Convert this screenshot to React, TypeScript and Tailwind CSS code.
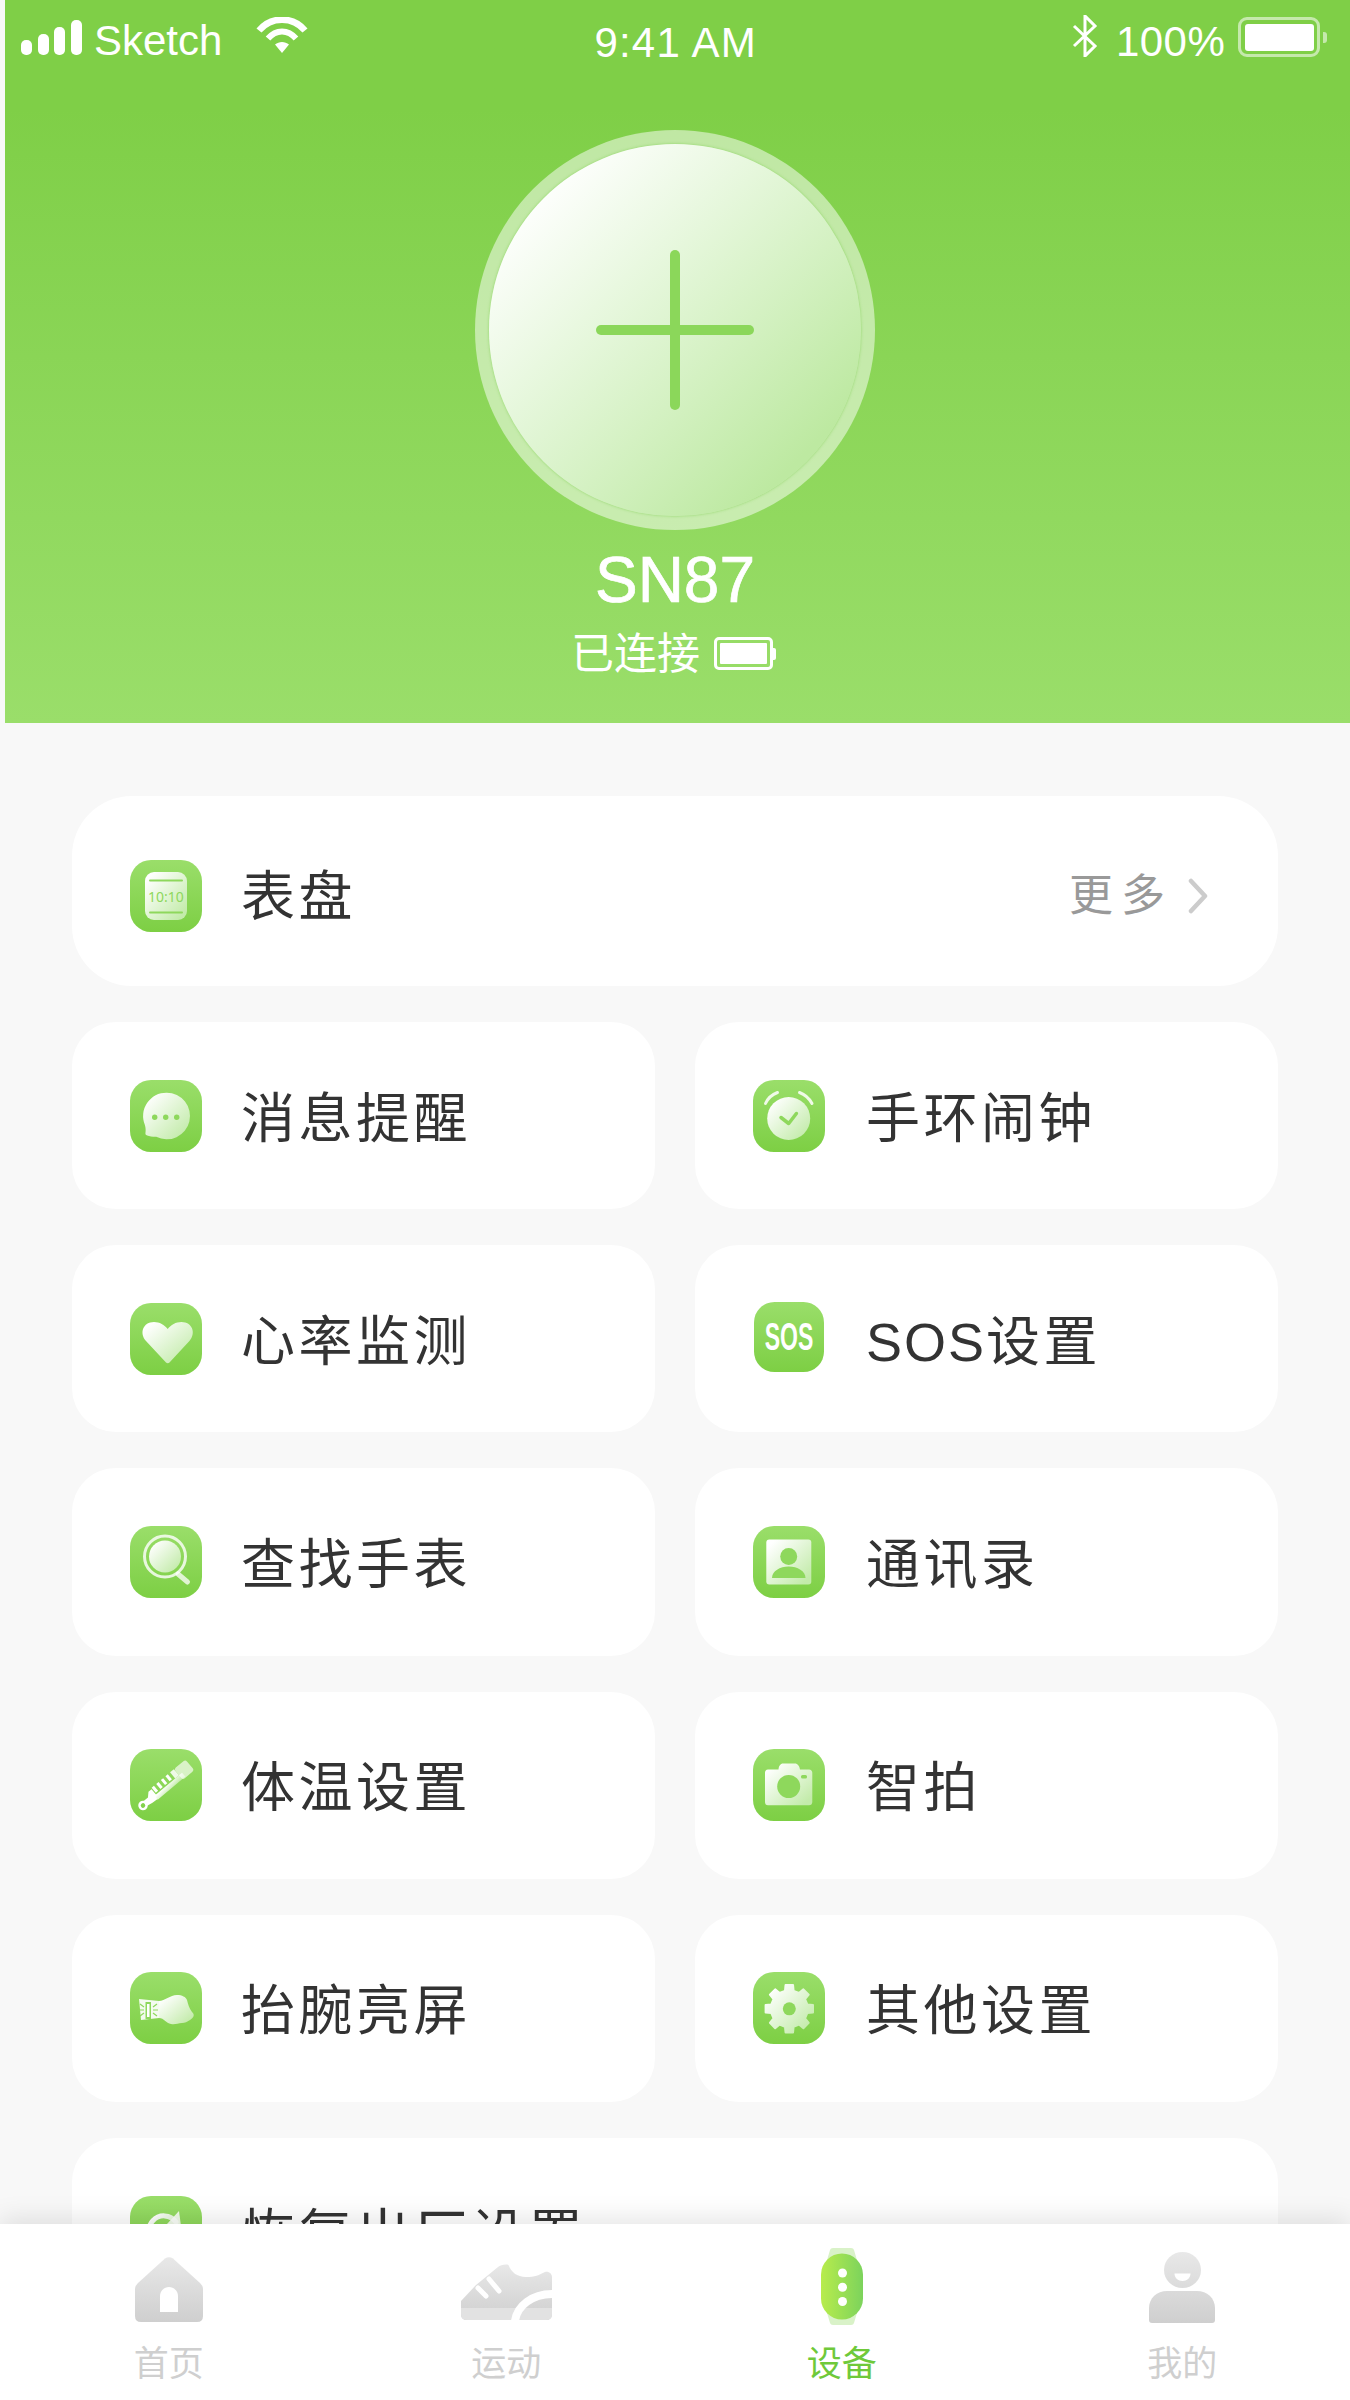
import React from "react";

const CJK = "font-['Liberation_Sans','Noto_Sans_CJK_SC',sans-serif]";

function IconDefs({ id }: { id: string }) {
  return (
    <defs>
      <linearGradient id={`${id}-bg`} x1="0" y1="0" x2="0" y2="1">
        <stop offset="0" stopColor="#9ade6a" />
        <stop offset="1" stopColor="#7dcf44" />
      </linearGradient>
      <linearGradient id={`${id}-fg`} x1="0.1" y1="0.1" x2="0.9" y2="0.9">
        <stop offset="0" stopColor="#ffffff" />
        <stop offset="1" stopColor="#c3ebaa" />
      </linearGradient>
    </defs>
  );
}

function gearPath(cx: number, cy: number, ro: number, ri: number, n: number) {
  const pts: string[] = [];
  for (let i = 0; i < n; i++) {
    const a = (i * 2 * Math.PI) / n - Math.PI / 2;
    const s = (2 * Math.PI) / n;
    const seq: [number, number][] = [
      [a - s * 0.2, ro],
      [a + s * 0.2, ro],
      [a + s * 0.3, ri],
      [a + s * 0.7, ri],
    ];
    seq.forEach(([t, r]) => pts.push(`${(cx + r * Math.cos(t)).toFixed(2)} ${(cy + r * Math.sin(t)).toFixed(2)}`));
  }
  return `M${pts.join(" L")} Z`;
}

const G = "#8ed85c";

const glyphs: Record<string, (fg: string) => React.ReactNode> = {
  dial: (fg) => (
    <>
      <rect x="15" y="12" width="42" height="48" rx="9" fill={fg} />
      <rect x="19" y="19.6" width="34" height="2" rx="1" fill={G} />
      <rect x="19" y="51.6" width="34" height="2" rx="1" fill={G} />
      <text x="36" y="41.5" textAnchor="middle" fontSize="14" fill={G} fontFamily="'Noto Sans',sans-serif">10:10</text>
    </>
  ),
  msg: (fg) => (
    <>
      <path d="M36.7 12.7a23.3 23.3 0 1 1-10.5 44.1c-3 .2-6.5-.6-9-1.4-1.6-.5-2-1.3-1.7-3 .3-2.300.2-4.500-.6-7.400a23.300 23.300 0 0 1 21.800-32.300Z" fill={fg} />
      <circle cx="24.700" cy="37.300" r="2.700" fill={G} />
      <circle cx="35.700" cy="37.300" r="2.700" fill={G} />
      <circle cx="46.700" cy="37.300" r="2.700" fill={G} />
    </>
  ),
  alarm: (fg) => (
    <>
      <circle cx="35.700" cy="38.500" r="21.500" fill={fg} />
      <path d="M12.500 23.500C15 18 19 14.500 24.500 12.500M46.500 12.500C52 14.500 56 18 59 23.500" stroke="#ffffff" strokeOpacity="0.85" strokeWidth="3" strokeLinecap="round" fill="none" />
      <path d="M28 37.500l7.700 6 7.700-10" stroke={G} strokeWidth="3.500" strokeLinecap="round" strokeLinejoin="round" fill="none" />
    </>
  ),
  heart: (fg) => (
    <path d="M36 59.500 16 38C9 30 13 19 24 19c5.500 0 10.500 2.800 13.700 7 3.200-4.200 8.200-7 13.700-7 11 0 15 11 8 19L39.500 59.500c-1 1.100-2.500 1.100-3.500 0Z" fill={fg} />
  ),
  sos: () => (
    <text x="36" y="49" textAnchor="middle" fontSize="39" fontWeight="700" fill="#ffffff" fontFamily="'Liberation Sans',sans-serif" textLength="50" lengthAdjust="spacingAndGlyphs">SOS</text>
  ),
  search: (fg) => (
    <>
      <circle cx="35" cy="30.500" r="20.500" fill="none" stroke="#ffffff" strokeOpacity="0.8" strokeWidth="3" />
      <circle cx="35" cy="30.500" r="16" fill={fg} />
      <path d="M48 48 57.500 56" stroke="#ffffff" strokeOpacity="0.75" strokeWidth="5" strokeLinecap="round" />
    </>
  ),
  contact: (fg) => (
    <>
      <rect x="13.300" y="13.500" width="45" height="45" rx="3" fill={fg} />
      <circle cx="35.700" cy="30.500" r="8.500" fill={G} />
      <path d="M19 52c0-7 8-11.500 16.700-11.500S52.500 45 52.500 52Z" fill={G} />
    </>
  ),
  thermo: (fg) => (
    <g transform="translate(13 56.500) rotate(-40)">
      <circle cx="0" cy="0" r="3.500" fill="none" stroke="#ffffff" strokeWidth="2.500" />
      <path d="M3 -3 L9 -3 L13 -7 L17 -7 L17 4.500 L9 4 L3 3 Z" fill="#ffffff" />
      <rect x="15" y="0" width="36" height="5" fill={fg} />
      <rect x="18" y="-8" width="3" height="6.500" fill="#ffffff" />
      <rect x="24" y="-8" width="3" height="6.500" fill="#ffffff" />
      <rect x="30" y="-8" width="3" height="6.500" fill="#ffffff" />
      <rect x="36" y="-8" width="3" height="6.500" fill="#ffffff" />
      <path d="M42 -8H47V0H42Z" fill="#ffffff" opacity="0.85" />
      <rect x="47" y="-8" width="15" height="14" rx="2.500" fill="#ffffff" opacity="0.65" />
    </g>
  ),
  camera: (fg) => (
    <>
      <path d="M15 20.500h10.500c.3-3.500 2-6 4.500-6h12c2.500 0 4.500 2.500 5 6h9c2 0 3.300 1.300 3.300 3.300V53c0 2-1.300 3.300-3.300 3.300H15c-2 0-3-1.300-3-3.300V23.800c0-2 1-3.300 3-3.300Z" fill={fg} />
      <circle cx="35.700" cy="37.500" r="11.500" fill={G} />
      <rect x="48" y="26" width="6" height="3.400" rx="1.500" fill={G} />
    </>
  ),
  hand: (fg) => (
    <>
      <path d="M29 29C35 29 40 23 47 23c5 0 9 2 10 5 1 4 2 8 5 12 3 3 2 5-2 8-3 2-5 3-8 3-4 0-7 2-11 1-5-1-7-6-12-6Z" fill={fg} />
      <path d="M9 27 29 29 29 46 11 48Z" fill="#ffffff" opacity="0.9" />
      <rect x="15.500" y="30" width="5.500" height="17" fill="#8ed85c" />
      <rect x="17" y="32" width="2.500" height="13" fill="#ffffff" />
      <path d="M8 38h6M10 32l4 3M10 44l4-3M23 38h5M23 35l4-3M23 41l4 3" stroke="#8ed85c" strokeWidth="1.200" />
    </>
  ),
  gear: (fg) => (
    <>
      <path d={gearPath(36.300, 36.800, 24, 18.500, 8)} fill={fg} stroke={fg} strokeWidth="2" strokeLinejoin="round" />
      <circle cx="36.300" cy="36.800" r="6.500" fill={G} />
    </>
  ),
  reset: (fg) => (
    <>
      <path d="M46 26a15 15 0 1 0 2 14" fill="none" stroke={fg} strokeWidth="5" strokeLinecap="round" />
      <path d="M49 15 51 30 37 28Z" fill="#ffffff" opacity="0.85" />
    </>
  ),
};

function AppIcon({ name, size = 72 }: { name: string; size?: number }) {
  const id = `ic-${name}`;
  return (
    <svg width={size} height={size} viewBox="0 0 72 72" className="shrink-0">
      <IconDefs id={id} />
      <rect x="0" y="0" width="72" height="72" rx="21" fill={`url(#${id}-bg)`} />
      {glyphs[name](`url(#${id}-fg)`)}
    </svg>
  );
}

function Card({ icon, label, right }: { icon: string; label: string; right?: boolean }) {
  const isSos = label.startsWith("SOS");
  return (
    <div className={`h-[187.2px] flex items-center rounded-[44px] bg-white ${right ? "pl-[58px]" : "pl-[57.500px]"}`}>
      <div className={isSos ? "flex w-[72px] justify-center -mt-[4px]" : "flex w-[72px] justify-center"}>
        <AppIcon name={icon} size={isSos ? 70 : 72} />
      </div>
      <span className={`pt-[6px] text-[54px] leading-[64px] tracking-[3.500px] text-[#333333] ${right ? "ml-[41px]" : "ml-[39.500px]"} ${CJK}`}>
        {isSos ? (
          <>
            <span className="tracking-[2px]">SOS</span>
            {label.slice(3)}
          </>
        ) : (
          label
        )}
      </span>
    </div>
  );
}

function StatusBar() {
  return (
    <div className={`flex h-[76px] items-start text-white text-[42px] leading-none ${CJK}`}>
      <div className="ml-[16px] mt-[20px] flex h-[35px] w-[61px] items-end justify-between">
        <div className="h-[15px] w-[11px] rounded-[5px] bg-white" />
        <div className="h-[21px] w-[11px] rounded-[5px] bg-white" />
        <div className="h-[28px] w-[11px] rounded-[5px] bg-white" />
        <div className="h-[35px] w-[11px] rounded-[5px] bg-white" />
      </div>
      <span className="ml-[12px] mt-[20px]">Sketch</span>
      <svg width="52" height="36" viewBox="0 0 52 36" className="ml-[34px] mt-[17px]">
        <path d="M3 13.500C15-1 37-1 49 13.500" stroke="#fff" strokeWidth="6.500" fill="none" />
        <path d="M12 21.500C20 12 32 12 40 21.500" stroke="#fff" strokeWidth="6" fill="none" />
        <path d="M26 36 19 27.500C23 24 29 24 33 27.500Z" fill="#fff" />
      </svg>
      <span className="ml-[286px] mt-[22px] tracking-[1.200px]">9:41 AM</span>
      <svg width="26" height="42" viewBox="0 0 26 42" className="ml-[315px] mt-[15px]">
        <path d="M2 11 23 31 13 41V1L23 11 2 31" stroke="#fff" strokeWidth="3" fill="none" />
      </svg>
      <span className="ml-[18px] mt-[21px] tracking-[0.500px]">100%</span>
      <div className="ml-[13px] mt-[17px] flex h-[40px] w-[82px] items-center justify-center rounded-[9px] border-[3px] border-white/55">
        <div className="h-[27px] w-[69px] rounded-[3px] bg-white" />
      </div>
      <div className="ml-[3px] mt-[32px] h-[11px] w-[4px] rounded-r-[3px] bg-white/55" />
    </div>
  );
}

function Header() {
  return (
    <header className="ml-[5px] h-[723px] shrink-0 bg-gradient-to-b from-[#7fcf47] from-[15%] to-[#9ade6a]">
      <StatusBar />
      <div className="flex flex-col items-center pr-[5px] pt-[53.500px]">
        <div className="flex h-[400px] w-[400px] items-center justify-center rounded-full bg-white/50">
          <div className="flex h-[372px] w-[372px] items-center justify-center rounded-full bg-gradient-to-br from-[#ffffff] from-[12%] to-[#bde9a1] to-[84%] shadow-[0_0_3px_rgba(110,200,60,0.6)]">
            <svg width="160" height="160" viewBox="0 0 160 160">
              <rect x="1" y="75" width="158" height="10" rx="5" fill="#8bd75a" />
              <rect x="75" y="0" width="10" height="160" rx="5" fill="#8bd75a" />
            </svg>
          </div>
        </div>
        <div className={`mt-[12px] text-[64px] leading-[76px] text-white [-webkit-text-stroke:0.7px_white] ${CJK}`}>SN87</div>
        <div className="mt-[11px] flex items-center pr-[3px]">
          <span className={`text-[43px] leading-[50px] text-white ${CJK}`}>已连接</span>
          <div className="ml-[14px] flex h-[33px] w-[59px] items-center justify-center rounded-[5px] border-[3px] border-white">
            <div className="h-[21px] w-[47px] rounded-[1px] bg-white" />
          </div>
          <div className="h-[12px] w-[3px] rounded-r-[2px] bg-white" />
        </div>
      </div>
    </header>
  );
}

const TabDefs = ({ id }: { id: string }) => (
  <defs>
    <linearGradient id={id} x1="0" y1="0" x2="0" y2="1">
      <stop offset="0" stopColor="#e8e8e8" />
      <stop offset="1" stopColor="#cfcfcf" />
    </linearGradient>
  </defs>
);

function HomeIcon() {
  return (
    <svg width="68" height="65" viewBox="0 0 68 65">
      <TabDefs id="tab-home" />
      <path d="M30 1.500Q34-1 38 1.500L65 26Q68 29 68 32V59Q68 65 62 65H6Q0 65 0 59V32Q0 29 3 26Z" fill="url(#tab-home)" />
      <path d="M25 55V39C25 34 29 30 34 30S43 34 43 39V55Z" fill="#fff" />
    </svg>
  );
}

function ShoeIcon() {
  return (
    <svg width="91" height="56" viewBox="0 0 91 56">
      <TabDefs id="tab-shoe" />
      <path d="M37 3C39 1 45 0 47.500 1 50 8 56 13 65 13 74 13 78 11 84 8 88 7 91 10 91 13V50Q91 56 85 56H6Q0 56 0 50V37L15 21Z" fill="url(#tab-shoe)" />
      <path d="M0 44H91V50Q91 56 85 56H6Q0 56 0 50Z" fill="#e2e2e2" />
      <path d="M54 57C56 42 71 30 91 30" stroke="#fff" strokeWidth="8" fill="none" />
      <path d="M17 24 25 32M28 15 38 27" stroke="#fff" strokeWidth="5" strokeLinecap="round" fill="none" />
    </svg>
  );
}

function BandIcon() {
  return (
    <svg width="42" height="77" viewBox="0 0 42 77">
      <defs>
        <linearGradient id="tab-band" x1="0" y1="0" x2="1" y2="0">
          <stop offset="0" stopColor="#b8ec4c" />
          <stop offset="1" stopColor="#7cd35c" />
        </linearGradient>
      </defs>
      <path d="M9 2Q9.500 0 12 0H30Q32.500 0 33 2L38 19V58L33 75Q32.500 77 30 77H12Q9.500 77 9 75L4 58V19Z" fill="#d9f2c8" />
      <rect x="0" y="5.500" width="42" height="66" rx="21" fill="url(#tab-band)" />
      <ellipse cx="21.500" cy="25" rx="4.500" ry="4.500" fill="#fff" />
      <ellipse cx="21.500" cy="39.300" rx="4.500" ry="4.500" fill="#fff" />
      <ellipse cx="21.500" cy="53.500" rx="4.500" ry="4.500" fill="#fff" />
    </svg>
  );
}

function PersonIcon() {
  return (
    <svg width="66" height="71" viewBox="0 0 66 71">
      <defs>
        <linearGradient id="tab-user" gradientUnits="userSpaceOnUse" x1="0" y1="0" x2="0" y2="71">
          <stop offset="0" stopColor="#e8e8e8" />
          <stop offset="1" stopColor="#cfcfcf" />
        </linearGradient>
      </defs>
      <ellipse cx="33.500" cy="18" rx="18.500" ry="18" fill="url(#tab-user)" />
      <path d="M25.500 21.500H41.500C41.500 26 38 29 33.500 29S25.500 26 25.500 21.500Z" fill="#fff" />
      <path d="M18 39H48C58 39 66 46 66 56V68Q66 71 63 71H3Q0 71 0 68V56C0 46 8 39 18 39Z" fill="url(#tab-user)" />
    </svg>
  );
}

function TabItem({ label, active, className, iconClass, children }: { label: string; active?: boolean; className?: string; iconClass: string; children: React.ReactNode }) {
  return (
    <div className={`flex flex-col items-center ${className ?? ""}`}>
      <div className={`flex h-[101px] items-end ${iconClass}`}>{children}</div>
      <span className={`mt-[20px] text-[35px] leading-[38px] ${active ? "text-[#6fc93a]" : "text-[#cfcfcf]"} ${CJK}`}>{label}</span>
    </div>
  );
}

export default function App() {
  const rows: [string, string, string, string][] = [
    ["msg", "消息提醒", "alarm", "手环闹钟"],
    ["heart", "心率监测", "sos", "SOS设置"],
    ["search", "查找手表", "contact", "通讯录"],
    ["thermo", "体温设置", "camera", "智拍"],
    ["hand", "抬腕亮屏", "gear", "其他设置"],
  ];
  return (
    <div className="flex h-[2400px] w-[1350px] flex-col overflow-hidden bg-[#f8f8f8]">
      <Header />
      <main className="min-h-0 flex-1 overflow-hidden px-[72px] pt-[73px]">
        <div className="flex h-[190px] items-center rounded-[60px] bg-white pl-[57.500px] pr-[70px] pt-[10px]">
          <AppIcon name="dial" />
          <span className={`ml-[39.500px] pt-[2px] text-[54px] leading-[64px] tracking-[3.500px] text-[#333333] ${CJK}`}>表盘</span>
          <span className={`ml-auto text-[44px] leading-[52px] tracking-[8px] text-[#999999] ${CJK}`}>更多</span>
          <svg width="20" height="36" viewBox="0 0 20 36" className="ml-[15px]">
            <path d="M3 3 17 18 3 33" stroke="#cccccc" strokeWidth="4.500" strokeLinecap="round" strokeLinejoin="round" fill="none" />
          </svg>
        </div>
        <div className="mt-[36px] grid grid-cols-2 gap-x-[40px] gap-y-[36px]">
          {rows.map((r) => (
            <React.Fragment key={r[0]}>
              <Card icon={r[0]} label={r[1]} />
              <Card icon={r[2]} label={r[3]} right />
            </React.Fragment>
          ))}
          <div className="col-span-2">
            <Card icon="reset" label="恢复出厂设置" />
          </div>
        </div>
      </main>
      <nav className="relative z-10 grid h-[176px] shrink-0 grid-cols-4 bg-white shadow-[0_-6px_24px_rgba(0,0,0,0.1)]">
        <TabItem label="首页" iconClass="pb-[3px]"><HomeIcon /></TabItem>
        <TabItem label="运动" iconClass="pb-[5px]"><ShoeIcon /></TabItem>
        <TabItem label="设备" active className="pr-[4px]" iconClass="pb-0"><BandIcon /></TabItem>
        <TabItem label="我的" className="pl-[2px]" iconClass="pb-[2px]"><PersonIcon /></TabItem>
      </nav>
    </div>
  );
}
